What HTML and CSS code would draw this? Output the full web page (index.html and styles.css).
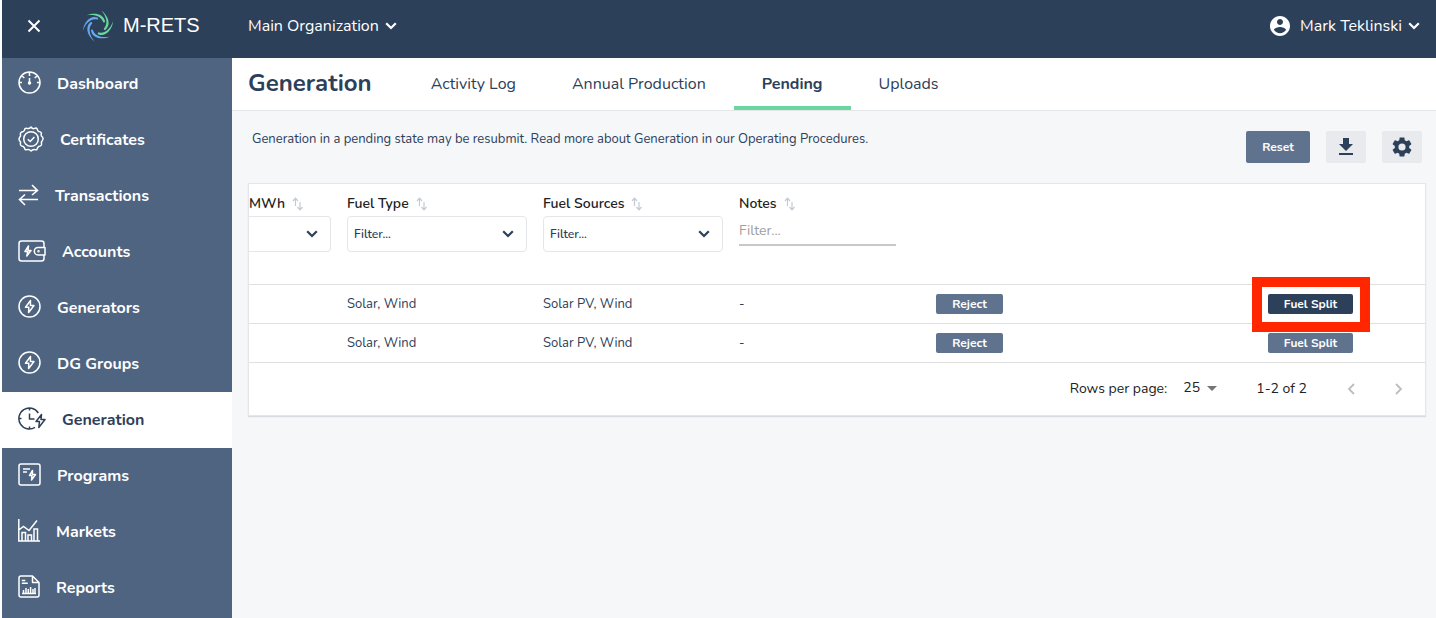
FILE: index.html
```html
<!DOCTYPE html>
<html lang="en">
<head>
<meta charset="utf-8">
<meta name="viewport" content="width=device-width, initial-scale=1">
<title>Generation - M-RETS</title>
<link rel="stylesheet" href="styles.css">
</head>
<body>
<svg class="defs" aria-hidden="true">
  <symbol id="chevron" viewBox="0 0 12 8"><path d="M1.2 1.2 6 6 10.800 1.200" fill="none" stroke="currentColor" stroke-width="2.200"/></symbol>
  <symbol id="sort" viewBox="0 0 12 14"><path d="M3.500 9V2M1 4 3.500 1.200 6 4M8 5v7M5.500 10 8 12.800l2.500-2.800" fill="none" stroke="currentColor" stroke-width="1.200"/></symbol>
  <symbol id="bolt-circle" viewBox="0 0 23 23"><g fill="none" stroke="currentColor" stroke-width="1.500" stroke-linejoin="round"><circle cx="11.500" cy="11.500" r="10.500"/><path d="M12.500 5.500 7.500 12.300h3.300L10.600 17.500 16 10.500h-3.600z"/></g></symbol>
</svg>

<header class="topbar">
  <button class="close" type="button" aria-label="Close menu"><svg width="14" height="14" viewBox="0 0 14 14"><path d="M1.500 1.500 12.500 12.500M12.500 1.500 1.500 12.500" stroke="currentColor" stroke-width="2"/></svg></button>
  <a class="brand" href="#">
    <svg width="32" height="32" viewBox="-16 -16 32 32" aria-hidden="true">
      <g fill="#67d99c"><path id="arm" d="M-11.700-10.700C-4-14 5.500-12.500 7-4.700A1 1 0 0 1 5-4.200C3.300-9.500-3-12.200-11.700-10.700z"/><use href="#arm" transform="rotate(60)"/><use href="#arm" transform="rotate(120)"/></g>
      <g fill="#66a8f2"><path d="M-11.700-10.700C-4-14 5.500-12.500 7-4.700A1 1 0 0 1 5-4.200C3.300-9.500-3-12.200-11.700-10.700z" transform="rotate(180)" id="arm-blue"/><use href="#arm-blue" transform="rotate(60)"/><use href="#arm-blue" transform="rotate(120)"/></g>
    </svg>
    <span>M-RETS</span>
  </a>
  <button class="menu" type="button">Main Organization <svg class="chev"><use href="#chevron"/></svg></button>
  <button class="menu user" type="button">
    <svg class="avatar" width="24" height="24" viewBox="0 0 24 24"><path fill="currentColor" d="M12 2C6.480 2 2 6.480 2 12s4.480 10 10 10 10-4.480 10-10S17.520 2 12 2zm0 3c1.660 0 3 1.340 3 3s-1.340 3-3 3-3-1.340-3-3 1.340-3 3-3zm0 14.200c-2.500 0-4.710-1.280-6-3.220.03-1.990 4-3.080 6-3.080 1.990 0 5.970 1.090 6 3.080-1.290 1.940-3.500 3.220-6 3.220z"/></svg>
    Mark Teklinski <svg class="chev"><use href="#chevron"/></svg></button>
</header>

<div class="shell">
  <nav class="sidebar" aria-label="Main">
    <a href="#"><svg width="23" height="23" viewBox="0 0 23 23" fill="none" stroke="currentColor" stroke-width="1.500"><circle cx="11.500" cy="11.500" r="10.500"/><path d="M11.500 1v4M1 11.500h3M19 11.500h3M4 5l2.300 2M19 5l-2.300 2M11.500 7v4"/><circle cx="11.500" cy="12" r="1.300" fill="currentColor" stroke="none"/><circle cx="11.500" cy="12" r="1" /></svg>Dashboard</a>
    <a href="#"><svg width="26" height="26" viewBox="0 0 26 26" fill="none" stroke="currentColor" stroke-width="1.500" stroke-linejoin="round"><path d="M13 1q1.500 2 3 1.600Q18.400 1.500 19 2.600q.5 2.200 1.600 2.800 2.400.2 2.800 1.600-.4 2.200 0 3Q25.400 11.500 25 13q-.2 1.200-1.600 3 .2 2.500 0 3-.6 1.200-2.800 1.600-1.200.8-1.600 2.800-1 .8-3 0-1.600.2-3 1.600-1.500-1.800-3-1.600-2 .8-3 0-.4-2-1.600-2.800Q3.200 20.200 2.600 19q-.4-1 0-3Q1 14.500 1 13q.2-1.400 1.600-3-.4-2.400 0-3 .8-1.400 2.800-1.600Q6.600 4.800 7 2.600q1-.9 3 0Q11.500 2.800 13 1z"/><circle cx="13" cy="13" r="7.300"/><path d="m9.800 13.200 2.400 2.300 4.200-4.600"/></svg>Certificates</a>
    <a href="#"><svg width="21" height="22" viewBox="0 0 21 22" fill="none" stroke="currentColor" stroke-width="1.600"><path d="M1 6.500h18M14 1l5.500 5.500L14 11M20 15.500H2M7 10.500 1.500 15.500 7 21"/></svg>Transactions</a>
    <a href="#"><svg width="28" height="22" viewBox="0 0 28 22" fill="none" stroke="currentColor" stroke-width="1.500" stroke-linejoin="round"><path d="M26 7V3.500Q26 1 23.500 1h-20Q1 1 1 3.500v15Q1 21 3.500 21h20q2.500 0 2.500-2.500V15M27 7.500h-7a3.700 3.700 0 0 0 0 7.400h7z"/><path d="M10.500 6 7 11.500h2.800L8.800 16 13 10.500h-3z"/><circle cx="20.500" cy="11.200" r=".5"/></svg>Accounts</a>
    <a href="#"><svg width="23" height="23"><use href="#bolt-circle"/></svg>Generators</a>
    <a href="#"><svg width="23" height="23"><use href="#bolt-circle"/></svg>DG Groups</a>
    <a class="current" href="#" aria-current="page"><svg width="28" height="23" viewBox="0 0 28 23" fill="none" stroke="currentColor" stroke-width="1.500" stroke-linejoin="round"><path d="M20.300 6A10.500 10.500 0 1 0 17 20.400M11.500 1v2.500M11.500 19.500V22M1 11.500h2.500M11.500 6.500v5.500h5"/><path d="M23.500 7.500 18 14.500h3.500L20.800 20.500 27 12.500h-4z"/></svg>Generation</a>
    <a href="#"><svg width="23" height="23" viewBox="0 0 23 23" fill="none" stroke="currentColor" stroke-width="1.500" stroke-linejoin="round"><rect x="1" y="1" width="21" height="21" rx="2"/><path d="M5 6h7M5 9h4M14.500 7.500 11.500 12.500h2.500L13.500 17l4-5.500h-3z"/></svg>Programs</a>
    <a href="#"><svg width="22" height="23" viewBox="0 0 22 23" fill="none" stroke="currentColor" stroke-width="1.500"><path d="M.8 0v22h21.200M.8 11 5.500 7.500l5.500 4 8-10M4 22v-8.500h3.500V22M10 22v-6h3.500v6M16 22V10h3.500v12"/></svg>Markets</a>
    <a href="#"><svg width="22" height="23" viewBox="0 0 22 23" fill="none" stroke="currentColor" stroke-width="1.500" stroke-linejoin="round"><path d="M14.500 1H3Q1 1 1 3v17q0 2 2 2h16q2 0 2-2V7.500zv6.500H21M3.800 5.500h3.500M3.800 8.300h6M4 18.500h14M5.500 18v-3M8 18v-5M10.300 18v-4M12.600 18v-6M15 18v-4M17 18v-5"/></svg>Reports</a>
  </nav>

  <main class="content">
    <div class="pagehead">
      <h1>Generation</h1>
      <div class="tabs">
        <a href="#">Activity Log</a>
        <a href="#">Annual Production</a>
        <a class="active" href="#" aria-current="page">Pending</a>
        <a href="#">Uploads</a>
      </div>
    </div>

    <div class="toolbar">
      <p>Generation in a pending state may be resubmit. Read more about Generation in our Operating Procedures.</p>
      <button class="btn reset" type="button">Reset</button>
      <button class="iconbtn" type="button" aria-label="Download"><svg width="24" height="24" viewBox="0 0 24 24"><path fill="currentColor" d="M19 9h-4V3H9v6H5l7 7 7-7zM5 18v2h14v-2H5z"/></svg></button>
      <button class="iconbtn" type="button" aria-label="Settings"><svg width="24" height="24" viewBox="0 0 24 24"><path fill="currentColor" d="M19.140 12.940c.04-.3.06-.61.06-.94 0-.32-.02-.64-.07-.94l2.030-1.580c.18-.14.23-.41.12-.61l-1.920-3.320c-.12-.22-.37-.29-.59-.22l-2.390.96c-.5-.38-1.030-.7-1.620-.94l-.36-2.540c-.04-.24-.24-.41-.48-.41h-3.840c-.24 0-.43.17-.47.41l-.36 2.540c-.59.24-1.130.57-1.620.94l-2.390-.96c-.22-.08-.47 0-.59.22L2.740 8.870c-.12.21-.08.47.12.61l2.030 1.580c-.05.3-.09.63-.09.94s.02.64.07.94l-2.030 1.580c-.18.14-.23.41-.12.61l1.920 3.320c.12.22.37.29.59.22l2.390-.96c.5.38 1.030.7 1.620.94l.36 2.540c.05.24.24.41.48.41h3.840c.24 0 .44-.17.47-.41l.36-2.540c.59-.24 1.130-.56 1.620-.94l2.390.96c.22.08.47 0 .59-.22l1.920-3.320c.12-.22.07-.47-.12-.61l-2.010-1.580zM12 15.600A3.600 3.600 0 1 1 12 8.400a3.600 3.600 0 0 1 0 7.200z"/></svg></button>
    </div>

    <section class="card">
      <table>
        <colgroup><col class="c-mwh"><col class="c-fuel"><col class="c-fuel"><col class="c-notes"><col class="c-reject"><col></colgroup>
        <thead>
          <tr>
            <th scope="col"><label for="f-mwh">MWh</label><svg class="sort"><use href="#sort"/></svg>
              <div class="select clipped"><select id="f-mwh"><option></option></select><svg class="chev"><use href="#chevron"/></svg></div></th>
            <th scope="col"><label for="f-type">Fuel Type</label><svg class="sort"><use href="#sort"/></svg>
              <div class="select"><select id="f-type"><option>Filter...</option></select><svg class="chev"><use href="#chevron"/></svg></div></th>
            <th scope="col"><label for="f-src">Fuel Sources</label><svg class="sort"><use href="#sort"/></svg>
              <div class="select"><select id="f-src"><option>Filter...</option></select><svg class="chev"><use href="#chevron"/></svg></div></th>
            <th scope="col"><label for="f-notes">Notes</label><svg class="sort"><use href="#sort"/></svg>
              <input id="f-notes" type="text" placeholder="Filter..."></th>
            <td></td><td></td>
          </tr>
        </thead>
        <tbody>
          <tr><td></td><td>Solar, Wind</td><td>Solar PV, Wind</td><td>-</td><td><button class="btn small reject" type="button">Reject</button></td><td><span class="marked"><button class="btn small split dark" type="button">Fuel Split</button></span></td></tr>
          <tr><td></td><td>Solar, Wind</td><td>Solar PV, Wind</td><td>-</td><td><button class="btn small reject" type="button">Reject</button></td><td><button class="btn small split" type="button">Fuel Split</button></td></tr>
        </tbody>
      </table>
      <div class="pager">
        <label for="rows">Rows per page:</label>
        <span class="rows"><select id="rows"><option>25</option></select><svg width="10" height="5" viewBox="0 0 10 5"><path d="M0 0h10L5 5z" fill="#757575"/></svg></span>
        <span class="range">1-2 of 2</span>
        <button type="button" aria-label="Previous page" disabled><svg width="8" height="12" viewBox="0 0 8 12"><path d="M7 1 2 6l5 5" fill="none" stroke="currentColor" stroke-width="1.800"/></svg></button>
        <button type="button" aria-label="Next page" disabled><svg width="8" height="12" viewBox="0 0 8 12"><path d="m1 1 5 5-5 5" fill="none" stroke="currentColor" stroke-width="1.800"/></svg></button>
      </div>
    </section>
  </main>
</div>
</body>
</html>
```
FILE: styles.css
```css
* { box-sizing: border-box; }
body {
  margin: 0;
  padding-left: 2px;
  min-height: 100vh;
  display: flex;
  flex-direction: column;
  background: #fff;
  color: #2d4059;
  font-family: Nunito, Lato, sans-serif;
  font-size: 14px;
}
button, select, input { font: inherit; color: inherit; }
button { border: 0; padding: 0; background: none; cursor: pointer; }
a { color: inherit; text-decoration: none; }
.defs { position: absolute; width: 0; height: 0; }
.chev { width: 12px; height: 8px; }

.topbar {
  display: flex;
  align-items: center;
  height: 58px;
  padding: 0 16px 7px 25px;
  background: #2d4059;
  color: #fff;
  position: relative;
  z-index: 1;
}
.topbar svg { display: block; }
.brand {
  display: flex;
  align-items: center;
  gap: 9px;
  width: 166px;
  margin-left: 41px;
  font: 20px "Liberation Sans", Arial, sans-serif;
}
.menu { display: flex; align-items: center; gap: 6px; font-size: 16px; }
.user { margin-left: auto; }
.avatar { margin-right: 2px; }

.shell { display: flex; flex: 1; }
.sidebar { width: 230px; flex: none; margin-top: -2px; background: #4f6480; color: #fff; }
.sidebar a {
  display: flex;
  align-items: center;
  gap: 16px;
  height: 56px;
  padding: 0 16px;
  font-size: 16px;
  font-weight: 700;
}
.sidebar svg { flex: none; margin-bottom: 3px; }
.sidebar .current { background: #fff; color: #2d4059; }

.content { flex: 1; min-width: 0; background: #f6f7f9; }
.pagehead {
  display: flex;
  align-items: stretch;
  gap: 31px;
  height: 53px;
  padding-left: 16px;
  background: #fff;
  border-bottom: 1px solid #e4e7ea;
}
h1 { margin: 0; font-size: 24px; line-height: 50px; font-weight: 700; }
.tabs { display: flex; font-size: 16px; }
.tabs a { padding: 4px 28px 0; line-height: 44px; border-bottom: 4px solid transparent; }
.tabs .active { font-weight: 700; border-color: #6dd6a0; }

.toolbar { display: flex; gap: 16px; padding: 20px 14px 20px 20px; }
.toolbar p { flex: 1; margin: 0; font-size: 13px; line-height: 16px; }
.btn { border-radius: 2px; background: #5f738f; color: #fff; font-size: 12px; font-weight: 700; }
.reset { width: 64px; height: 32px; }
.iconbtn { width: 40px; height: 32px; border-radius: 2px; background: #e8eaed; }
.iconbtn svg { display: block; margin: auto; }

.card {
  margin: 0 10px 0 16px;
  background: #fff;
  border: 1px solid #e4e6ea;
  box-shadow: 0 1px 1px #d9dce0;
}
table { width: 100%; table-layout: fixed; border-collapse: collapse; }
.c-mwh { width: 90px; }
.c-fuel { width: 196px; }
.c-notes { width: 197px; }
.c-reject { width: 332px; }
td, th { padding: 0 8px; text-align: left; border-bottom: 1px solid #e0e0e0; }
td:first-child, th:first-child { padding-left: 0; }
td { height: 39px; font-size: 13px; }
th { height: 100px; padding-top: 11px; vertical-align: top; color: #212121; font-weight: 600; line-height: 18px; }
.sort { width: 12px; height: 14px; margin-left: 7px; vertical-align: -3px; color: #c3cad5; }
.select { position: relative; margin-top: 3px; }
.select select {
  display: block;
  width: 100%;
  height: 36px;
  padding: 0 6px;
  appearance: none;
  border: 1px solid #e4e6ea;
  border-radius: 4px;
  background: #fff;
  color: #2d4059;
  font-size: 12px;
  font-weight: 600;
}
.clipped select { border-left: 0; border-radius: 0 4px 4px 0; }
.select .chev { position: absolute; right: 13px; top: 14px; color: #2d4059; }
th input {
  display: block;
  width: 157px;
  height: 29px;
  margin-top: 4px;
  padding: 0;
  border: 0;
  border-bottom: 2px solid #c8c8c8;
  font-weight: 400;
}
th input::placeholder { color: #9e9e9e; }
.btn.small { display: block; height: 20px; }
.btn.reject { width: 67px; }
.btn.split { width: 85px; }
.btn.dark { background: #2d4059; }
.marked { position: relative; display: block; width: 85px; }
.marked::after {
  content: "";
  position: absolute;
  inset: -17px -17px -18px -16px;
  border: 10px solid #ff2600;
  pointer-events: none;
}
.pager {
  display: flex;
  align-items: center;
  justify-content: flex-end;
  height: 52px;
  padding-right: 22px;
  color: #212121;
}
.rows { position: relative; width: 34px; margin: 0 39px 0 16px; }
.rows select { display: block; width: 100%; padding: 0 0 2px; border: 0; appearance: none; background: none; }
.rows svg { position: absolute; right: 0; top: 8px; }
.pager button { width: 8px; margin-left: 40px; color: #bdbdbd; }
.pager button svg { display: block; }
```
